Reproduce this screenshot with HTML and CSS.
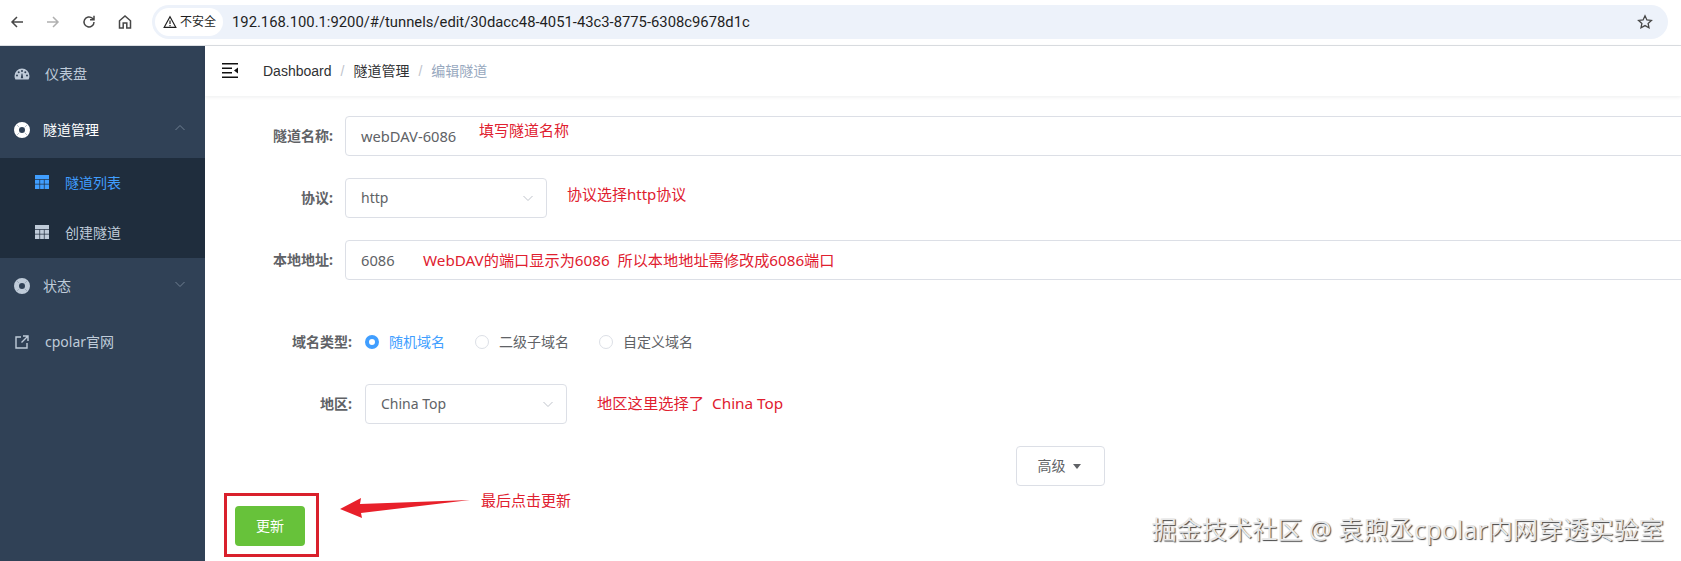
FILE: index.html
```html
<!DOCTYPE html>
<html>
<head>
    <meta charset="utf-8">
    <title>编辑隧道</title>
    <link rel="stylesheet" href="styles.css">
</head>
<body>
    <div class="toolbar">
        <div class="nav-btns">
            <svg class="nav-icon" viewBox="0 0 16 16"><path d="M14 8H3M8 3L3 8l5 5"/></svg>
            <svg class="nav-icon off" viewBox="0 0 16 16"><path d="M2 8h11M8 3l5 5-5 5"/></svg>
            <svg class="nav-icon" viewBox="0 0 16 16"><path d="M13 8a5 5 0 1 1-1.6-3.7L13 5.8M13 1.8v4h-4"/></svg>
            <svg class="nav-icon" viewBox="0 0 16 16"><path d="M2.5 14V6.8L8 2l5.5 4.8V14h-3.7V9H6.200v5z"/></svg>
        </div>
        <div class="omnibox">
            <div class="chip">
                <svg class="warn" viewBox="0 0 14 14"><path d="M7 1.800L12.800 12.300H1.200zM7 5.500v3.600M7 10v1.200"/></svg>
                <span>不安全</span>
            </div>
            <span class="url">192.168.100.1:9200/#/tunnels/edit/30dacc48-4051-43c3-8775-6308c9678d1c</span>
            <svg class="star" viewBox="0 0 16 16"><path d="M8 1.800l1.900 4.100 4.500.5-3.300 3 .9 4.400L8 11.600l-4 2.200.9-4.400-3.300-3 4.500-.5z"/></svg>
        </div>
    </div>

    <div class="app">
        <div class="sidebar">
            <div class="menu-item">
                <svg class="menu-icon" viewBox="0 0 16 16"><path d="M8 2.500a7.500 7.500 0 0 0-7.500 7.500c0 1.300.3 2.400.9 3.500h13.200c.6-1.100.9-2.200.9-3.500A7.500 7.500 0 0 0 8 2.500zM3 10.500a1 1 0 1 1 0-2 1 1 0 0 1 0 2zm1.700-3.300a1 1 0 1 1 0-2 1 1 0 0 1 0 2zM8 6a1 1 0 1 1 0-2 1 1 0 0 1 0 2zm1.200 6.200H6.800L7.600 7.500h.8zm2.100-5a1 1 0 1 1 0-2 1 1 0 0 1 0 2zm1.700 3.300a1 1 0 1 1 0-2 1 1 0 0 1 0 2z"/></svg>
                <span class="menu-text first">仪表盘</span>
            </div>
            <div class="menu-item open">
                <svg class="menu-icon" viewBox="0 0 16 16"><circle cx="8" cy="8" r="5.500" fill="none" stroke="currentColor" stroke-width="5"/><path class="buoy-cuts" d="M2.800 2.800l2.600 2.600M13.200 2.800l-2.600 2.600M2.800 13.200l2.600-2.600M13.200 13.200l-2.600-2.600"/></svg>
                <span class="menu-text">隧道管理</span>
                <svg class="chevron" viewBox="0 0 12 12"><path d="M1.500 8L6 3.500 10.500 8"/></svg>
            </div>
            <div class="submenu">
                <div class="sub-item active">
                    <svg class="sub-icon" viewBox="0 0 14 14"><path d="M0 0h14v14H0z"/><path class="grid" d="M0 4.500h14M0 9.200h14M4.700 4.500V14M9.300 4.500V14"/></svg>
                    <span>隧道列表</span>
                </div>
                <div class="sub-item">
                    <svg class="sub-icon" viewBox="0 0 14 14"><path d="M0 0h14v14H0z"/><path class="grid" d="M0 4.500h14M0 9.200h14M4.700 4.500V14M9.300 4.500V14"/></svg>
                    <span>创建隧道</span>
                </div>
            </div>
            <div class="menu-item">
                <svg class="menu-icon" viewBox="0 0 16 16"><circle cx="8" cy="8" r="5.500" fill="none" stroke="currentColor" stroke-width="5"/><path class="buoy-cuts" d="M2.800 2.800l2.600 2.600M13.200 2.800l-2.600 2.600M2.800 13.200l2.600-2.600M13.200 13.200l-2.600-2.600"/></svg>
                <span class="menu-text">状态</span>
                <svg class="chevron" viewBox="0 0 12 12"><path d="M1.500 4L6 8.500 10.500 4"/></svg>
            </div>
            <div class="menu-item">
                <svg class="menu-icon link" viewBox="0 0 16 16"><path d="M7 3H2v11h11V9M9 2h5v5M14 2L7.500 8.500"/></svg>
                <span class="menu-text first">cpolar官网</span>
            </div>
        </div>

        <div class="main">
            <div class="navbar">
                <svg class="hamburger" viewBox="0 0 16 15"><path d="M0 0h16v1.600H0zM0 4.500h10v1.600H0zM0 9h10v1.600H0zM0 13.400h16V15H0zM16 4.500v6l-4-3z"/></svg>
                <div class="breadcrumb">
                    <span>Dashboard</span><span class="sep">/</span><span>隧道管理</span><span class="sep">/</span><span class="current">编辑隧道</span>
                </div>
            </div>

            <div class="form">
                <div class="row">
                    <label class="label">隧道名称:</label>
                    <div class="input wide">webDAV-6086</div>
                    <span class="note note-name">填写隧道名称</span>
                </div>
                <div class="row">
                    <label class="label">协议:</label>
                    <div class="input select">http<svg class="caret" viewBox="0 0 12 12"><path d="M1.500 4L6 8.500 10.500 4"/></svg></div>
                    <span class="note note-proto">协议选择http协议</span>
                </div>
                <div class="row">
                    <label class="label">本地地址:</label>
                    <div class="input wide">6086</div>
                    <span class="note note-addr">WebDAV的端口显示为6086&nbsp;&nbsp;所以本地地址需修改成6086端口</span>
                </div>
                <div class="row indent radio-row">
                    <label class="label">域名类型:</label>
                    <div class="radios">
                        <span class="radio checked"><i></i>随机域名</span>
                        <span class="radio"><i></i>二级子域名</span>
                        <span class="radio"><i></i>自定义域名</span>
                    </div>
                </div>
                <div class="row indent">
                    <label class="label">地区:</label>
                    <div class="input select">China Top<svg class="caret" viewBox="0 0 12 12"><path d="M1.500 4L6 8.500 10.500 4"/></svg></div>
                    <span class="note note-region">地区这里选择了&nbsp;&nbsp;China Top</span>
                </div>
                <div class="advanced">高级<span class="down"></span></div>
                <div class="update-row">
                    <div class="mark">
                        <button class="update-btn">更新</button>
                    </div>
                    <svg class="arrow" viewBox="0 0 130 20"><path d="M0 11L21 0l-1 6L130 2 21 15l1 5z"/></svg>
                    <span class="note note-update">最后点击更新</span>
                </div>
            </div>
        </div>
    </div>

    <div class="watermark">掘金技术社区 @ 袁煦丞cpolar内网穿透实验室</div>
</body>
</html>
```

FILE: styles.css
```css
* {
    box-sizing: border-box;
}

html, body {
    height: 561px;
    margin: 0;
    overflow: hidden;
}

body {
    position: relative;
    background-color: #fff;
    font-family: "Noto Sans", "Noto Sans CJK SC", sans-serif;
    font-size: 14px;
    line-height: 20px;
    color: #606266;
}

/* browser bar */
.toolbar {
    display: flex;
    align-items: center;
    height: 46px;
    padding: 0 13px 2px 0;
    border-bottom: 1px solid #dcdfe3;
}

.nav-btns {
    display: flex;
    align-items: center;
    gap: 20px;
    width: 152px;
    padding-left: 9px;
}

.nav-icon {
    width: 16px;
    height: 16px;
    fill: none;
    stroke: #474747;
    stroke-width: 1.500;
}

.nav-icon.off {
    stroke: #b0b0b0;
}

.omnibox {
    flex: 1;
    display: flex;
    align-items: center;
    height: 34px;
    padding: 0 15px 0 3px;
    border-radius: 17px;
    background-color: #edf2fa;
}

.chip {
    display: flex;
    align-items: center;
    gap: 3px;
    height: 28px;
    width: 68px;
    padding-left: 8px;
    border-radius: 14px;
    background-color: #fff;
    font-size: 12px;
    color: #1f1f1f;
}

.warn {
    width: 14px;
    height: 14px;
    fill: none;
    stroke: #1f1f1f;
    stroke-width: 1.200;
}

.url {
    flex: 1;
    margin-left: 9px;
    font-family: "Roboto", "Noto Sans", sans-serif;
    font-size: 14.800px;
    color: #1f1f1f;
}

.star {
    width: 16px;
    height: 16px;
    fill: none;
    stroke: #474747;
    stroke-width: 1.300;
}

/* page */
.app {
    display: flex;
    height: 515px;
}

.sidebar {
    flex: none;
    width: 205px;
    background-color: #304156;
    color: #bfcbd9;
}

.menu-item {
    display: flex;
    align-items: center;
    height: 56px;
    padding: 0 19px 0 14px;
}

.menu-item.open {
    color: #fff;
}

.menu-icon {
    flex: none;
    width: 16px;
    height: 16px;
    fill: currentColor;
}

.menu-icon.link {
    fill: none;
    stroke: currentColor;
    stroke-width: 1.400;
}

.buoy-cuts {
    fill: none;
    stroke: #8494a6;
    stroke-width: .6;
}

.menu-text {
    flex: 1;
    margin-left: 13px;
}

.menu-text.first {
    margin-left: 15px;
}

.chevron {
    width: 12px;
    height: 12px;
    margin-top: -4px;
    fill: none;
    stroke: #6f7f91;
    stroke-width: 1;
}

.submenu {
    background-color: #1f2d3d;
}

.sub-item {
    display: flex;
    align-items: center;
    gap: 16px;
    height: 50px;
    padding: 0 0 0 35px;
}

.sub-item .sub-icon {
    margin-top: -3px;
}

.sub-item.active {
    color: #409eff;
}

.sub-icon {
    width: 14px;
    height: 14px;
    fill: currentColor;
}

.sub-icon .grid {
    fill: none;
    stroke: #1f2d3d;
    stroke-width: .7;
}

.main {
    flex: 1;
    min-width: 0;
}

.navbar {
    display: flex;
    align-items: center;
    height: 50px;
    padding-left: 17px;
    box-shadow: 0 1px 4px rgba(0, 21, 41, .08);
}

.hamburger {
    width: 16px;
    height: 15px;
    fill: #111;
    margin-bottom: 2px;
}

.breadcrumb {
    margin-left: 25px;
    margin-bottom: 1px;
    font-family: "Liberation Sans", "Noto Sans CJK SC", sans-serif;
    color: #303133;
}

.sep {
    margin: 0 9px;
    color: #c0c4cc;
}

.current {
    color: #97a8be;
}

/* form */
.form {
    padding-top: 20px;
}

.row {
    position: relative;
    display: flex;
    align-items: center;
    height: 40px;
    margin-bottom: 22px;
}

.radio-row {
    margin-top: 42px;
}

.label {
    flex: none;
    width: 128px;
    margin-right: 12px;
    text-align: right;
    font-weight: bold;
    font-size: 14px;
}

.indent .label {
    width: 147px;
    margin-right: 13px;
}

.input {
    display: flex;
    align-items: center;
    justify-content: space-between;
    height: 40px;
    padding: 0 15px;
    border: 1px solid #dcdfe6;
    border-radius: 4px;
    background-color: #fff;
}

.wide {
    flex: none;
    width: 1400px;
    font-size: 14.700px;
}

.select {
    flex: none;
    width: 202px;
    padding-right: 12px;
}

.caret {
    width: 12px;
    height: 12px;
    fill: none;
    stroke: #c0c4cc;
    stroke-width: 1;
}

.radios {
    display: flex;
    gap: 30px;
}

.radio {
    display: flex;
    align-items: center;
    gap: 10px;
}

.radio i {
    width: 14px;
    height: 14px;
    border: 1px solid #dcdfe6;
    border-radius: 50%;
    background-color: #fff;
}

.radio.checked {
    color: #409eff;
}

.radio.checked i {
    border: 4px solid #409eff;
}

.note {
    position: absolute;
    color: #e0202f;
    font-size: 15px;
    white-space: nowrap;
}

.note-name {
    left: 274px;
    top: 4px;
}

.note-proto {
    left: 362px;
    top: 6px;
}

.note-addr {
    left: 218px;
    top: 10px;
    font-size: 15.200px;
}

.note-region {
    left: 392px;
    top: 9px;
    font-size: 15.300px;
}

.advanced {
    display: flex;
    align-items: center;
    justify-content: center;
    width: 89px;
    height: 40px;
    margin-left: 811px;
    padding-right: 3px;
    border: 1px solid #dcdfe6;
    border-radius: 4px;
}

.down {
    width: 0;
    height: 0;
    margin-left: 7px;
    border-top: 5px solid #606266;
    border-left: 4px solid transparent;
    border-right: 4px solid transparent;
}

.update-row {
    position: relative;
    margin: 7px 0 0 19px;
    width: 95px;
}

.mark {
    width: 95px;
    height: 64px;
    padding: 10px 0 0 8px;
    border: 3px solid #d9202c;
}

.update-btn {
    display: block;
    width: 70px;
    height: 40px;
    border: none;
    border-radius: 4px;
    background-color: #67c23a;
    color: #fff;
    font: inherit;
}

.arrow {
    position: absolute;
    left: 116px;
    top: 5px;
    width: 130px;
    height: 20px;
    fill: #e8202a;
}

.note-update {
    left: 257px;
    top: -3px;
}

.watermark {
    position: absolute;
    right: 17px;
    top: 513px;
    font-size: 25.200px;
    line-height: 32px;
    color: #e8e8e8;
    text-shadow: 1px 1px 1px #444;
    white-space: nowrap;
}
```
